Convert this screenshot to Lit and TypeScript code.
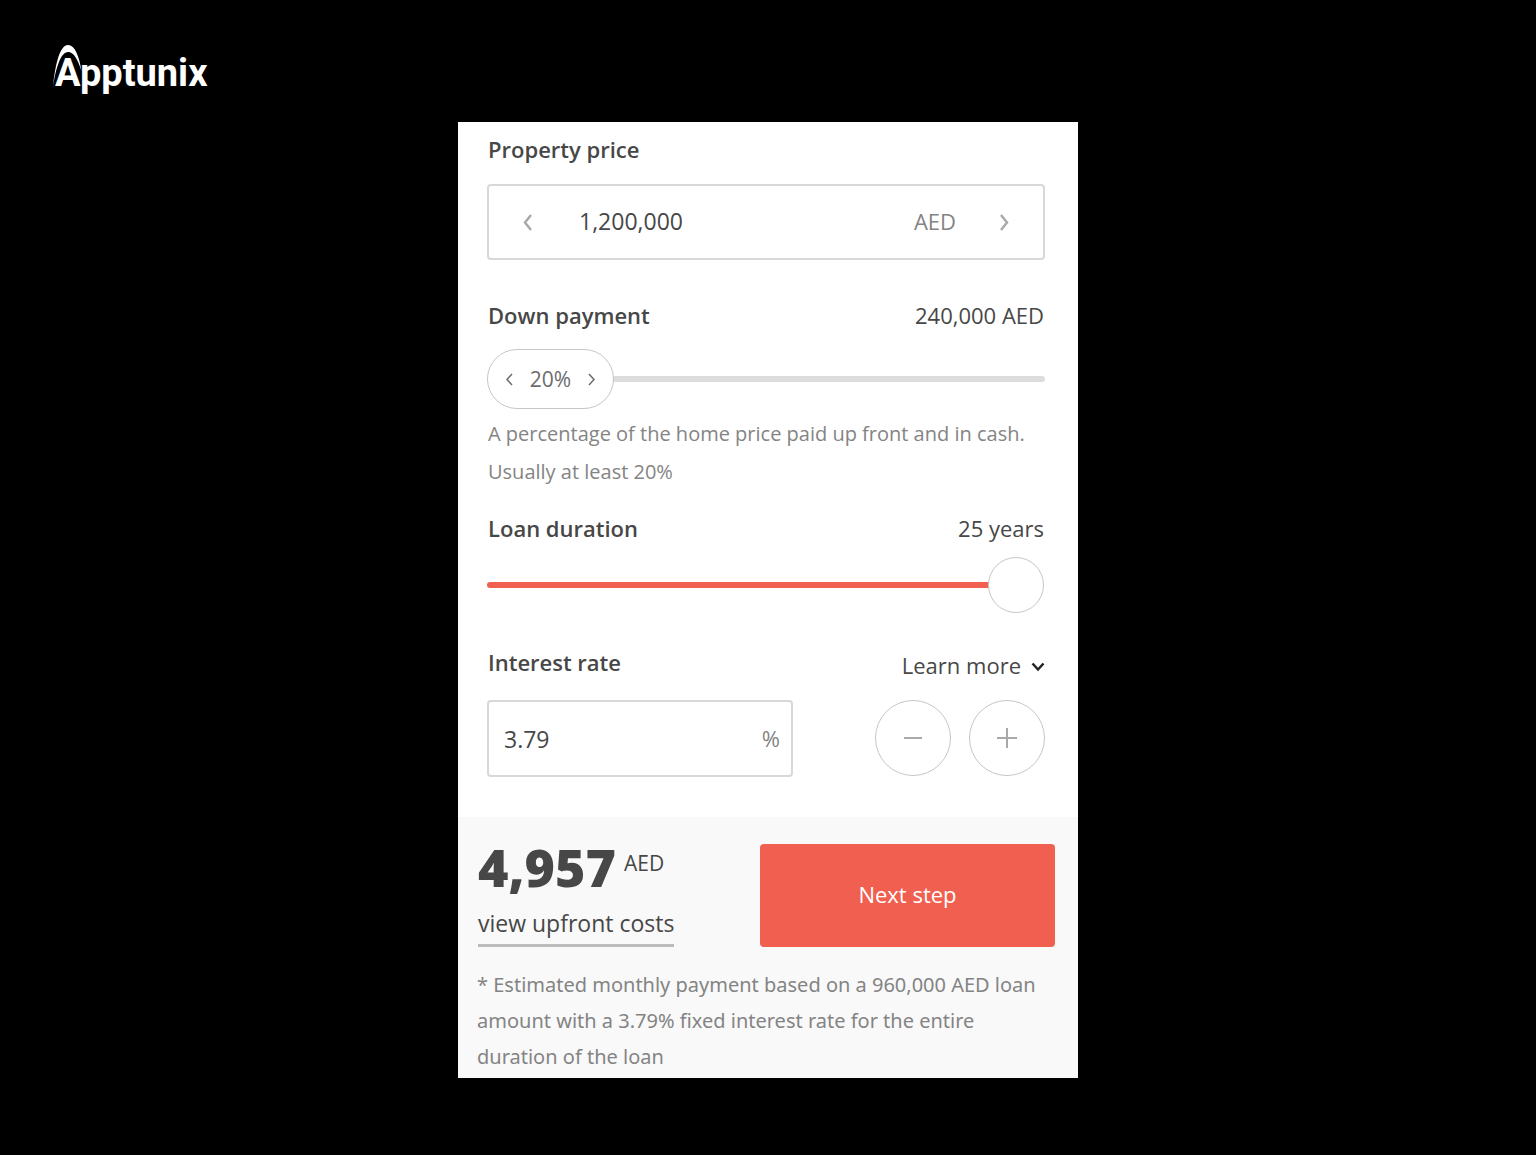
import { LitElement, html, css, svg } from "lit";
import { customElement, state } from "lit/decorators.js";

const chevronLeft = svg`<path d="M8 2 L2 9.5 L8 17" />`;
const chevronRight = svg`<path d="M2 2 L8 9.5 L2 17" />`;
const smallLeft = svg`<path d="M7 2 L2 7.5 L7 13" />`;
const smallRight = svg`<path d="M1 2 L6 7.5 L1 13" />`;

const format = (n: number) => Math.round(n).toLocaleString("en-US");

@customElement("app-root")
export class AppRoot extends LitElement {
  @state() private price = 1200000;
  @state() private percent = 20;
  @state() private years = 25;
  @state() private rate = 3.79;

  static styles = css`
    :host {
      display: block;
      min-height: 100vh;
      background: #000;
      color: #474747;
      font-family: "Open Sans", "Noto Sans", sans-serif;
      font-size: 22px;
      line-height: 32px;
    }
    * { box-sizing: border-box; }
    button, input { font: inherit; color: inherit; margin: 0; }
    button { padding: 0; border: 0; background: none; cursor: pointer; }
    svg { display: block; fill: none; stroke: currentColor; }
    p { margin: 0; }
    .top { height: 122px; padding: 44px 53px 0; }
    .brand { position: relative; display: inline-block; color: #fff; text-decoration: none; }
    .arc { position: absolute; left: 0; top: 0; fill: #fff; stroke: none; }
    .name {
      display: block;
      padding: 3px 0 0 2px;
      font-family: Roboto, sans-serif;
      font-size: 38px;
      line-height: 52px;
      font-weight: 700;
    }
    .card { width: min(100%, 620px); margin: 0 auto; background: #fff; }
    .form { padding: 11px 33px 40px 29px; }
    .row { display: flex; justify-content: space-between; align-items: center; }
    .label { font-weight: 600; padding-left: 1px; }
    output { padding-right: 1px; }
    .field {
      display: flex;
      align-items: center;
      height: 76px;
      border: 2px solid #d8d8d8;
      border-radius: 4px;
      background: #fff;
    }
    .field input {
      flex: 1;
      min-width: 0;
      height: 100%;
      border: 0;
      outline: 0;
      background: none;
      font-size: 23px;
    }
    .unit { color: #848484; }
    .price { margin: 19px 0 39px; }
    .price input { padding: 0 0 3px 12px; }
    .price .unit { padding: 0 9px 2px 0; }
    .step { display: grid; place-items: center; width: 78px; height: 100%; color: #a9a9a9; }
    .slider { position: relative; height: 60px; margin-top: 18px; }
    .range {
      display: block;
      width: 100%;
      height: 100%;
      appearance: none;
      background: none;
      cursor: pointer;
    }
    .range::-webkit-slider-runnable-track {
      height: 6px;
      border-radius: 3px;
      background: #dcdcdc;
    }
    .range::-webkit-slider-thumb {
      appearance: none;
      border: 1px solid #c6c6c6;
      background: #fff;
    }
    .deposit::-webkit-slider-thumb {
      width: 127px;
      height: 60px;
      margin-top: -27px;
      border-radius: 30px;
    }
    .duration::-webkit-slider-runnable-track {
      background: linear-gradient(to right, #f05f50 var(--fill), #dcdcdc var(--fill));
    }
    .duration::-webkit-slider-thumb {
      width: 56px;
      height: 56px;
      margin-top: -25px;
      border-radius: 50%;
    }
    .grip {
      position: absolute;
      top: 0;
      width: 127px;
      height: 60px;
      padding: 0 18px;
      display: flex;
      align-items: center;
      justify-content: space-between;
      pointer-events: none;
      font-size: 21px;
      color: #6c6c6c;
    }
    .help { margin: 6px 0 21px; padding-left: 1px; font-size: 20px; line-height: 38px; color: #848484; }
    .loan { height: 56px; margin: 13px 0 33px; padding-right: 1px; }
    .more { display: flex; align-items: center; gap: 10px; padding-top: 3px; }
    .more svg { margin-top: 4px; color: #222; }
    .interest { height: 32px; align-items: flex-start; }
    .rate { margin-top: 22px; align-items: flex-start; }
    .rate .field { width: 306px; height: 77px; padding-right: 11px; }
    .rate .field input { padding: 0 0 0 15px; }
    .rate .unit { padding-bottom: 2px; }
    .rounds { display: flex; gap: 18px; color: #a9a9a9; }
    .round {
      display: grid;
      place-items: center;
      width: 76px;
      height: 76px;
      border: 1px solid #c6c6c6;
      border-radius: 50%;
    }
    .summary { padding: 27px 23px 3px 19px; background: #f9f9f9; }
    .total { display: flex; align-items: flex-start; gap: 8px; padding-left: 1px; }
    .amount { font-size: 52px; line-height: 46px; font-weight: 800; }
    .currency { font-size: 21px; line-height: 38px; }
    .costs {
      display: inline-block;
      margin: 17px 0 0 1px;
      padding-bottom: 5px;
      border-bottom: 3px solid #bcbcbc;
      color: inherit;
      text-decoration: none;
      font-size: 23px;
    }
    .next {
      width: 295px;
      height: 103px;
      padding-bottom: 4px;
      border-radius: 4px;
      background: #f05f50;
      color: #fff;
    }
    .note {
      margin-top: 20px;
      font-family: "Noto Sans", "Open Sans", sans-serif;
      font-size: 20px;
      line-height: 36px;
      color: #848484;
    }
  `;

  private get payment() {
    const loan = this.price * (1 - this.percent / 100);
    const r = this.rate / 1200;
    const n = this.years * 12;
    return r > 0 ? (loan * r) / (1 - Math.pow(1 + r, -n)) : loan / n;
  }

  private get note() {
    const loan = format(this.price * (1 - this.percent / 100));
    return `* Estimated monthly payment based on a ${loan} AED loan amount with a ${this.rate}% fixed interest rate for the entire duration of the loan`;
  }

  private stepPrice(by: number) {
    this.price = Math.max(0, this.price + by);
  }

  private stepRate(by: number) {
    this.rate = Math.max(0, Math.round((this.rate + by) * 100) / 100);
  }

  private onPrice(e: Event) {
    const n = Number((e.target as HTMLInputElement).value.replace(/[^\d]/g, ""));
    if (n) this.price = n;
  }

  private onRate(e: Event) {
    const n = parseFloat((e.target as HTMLInputElement).value);
    if (!isNaN(n)) this.rate = n;
  }

  render() {
    const share = (this.percent - 20) / 60;
    const fill = ((this.years - 1) / 24) * 95;
    return html`
      <header class="top">
        <a class="brand" href="#">
          <svg class="arc" width="30" height="44" viewBox="0 0 30 44">
            <path d="M0 43 C2 24 6 1 15 1 C22 1 26 12 28.500 27 C25 16 21 8 15 8 C8 8 3 23 0 43 Z" />
          </svg>
          <span class="name">Apptunix</span>
        </a>
      </header>
      <main class="card">
        <section class="form">
          <label class="row label" for="price">Property price</label>
          <div class="field price">
            <button class="step" aria-label="Decrease price" @click=${() => this.stepPrice(-10000)}>
              <svg width="10" height="18" stroke-width="2.5">${chevronLeft}</svg>
            </button>
            <input id="price" type="text" .value=${format(this.price)} @change=${this.onPrice} />
            <span class="unit">AED</span>
            <button class="step" aria-label="Increase price" @click=${() => this.stepPrice(10000)}>
              <svg width="10" height="18" stroke-width="2.5">${chevronRight}</svg>
            </button>
          </div>

          <div class="row">
            <label class="label" for="deposit">Down payment</label>
            <output for="deposit">${format((this.price * this.percent) / 100) + " AED"}</output>
          </div>
          <div class="slider">
            <input id="deposit" class="range deposit" type="range" min="20" max="80"
              .value=${String(this.percent)}
              @input=${(e: Event) => (this.percent = Number((e.target as HTMLInputElement).value))} />
            <div class="grip" style="left: calc((100% - 127px) * ${share})">
              <svg width="8" height="14" stroke-width="1.5">${smallLeft}</svg>
              <span>${this.percent + "%"}</span>
              <svg width="8" height="14" stroke-width="1.5">${smallRight}</svg>
            </div>
          </div>
          <p class="help">A percentage of the home price paid up front and in cash. Usually at least 20%</p>

          <div class="row">
            <label class="label" for="duration">Loan duration</label>
            <output for="duration">${this.years + " years"}</output>
          </div>
          <div class="slider loan">
            <input id="duration" class="range duration" type="range" min="1" max="25"
              style="--fill: ${fill}%"
              .value=${String(this.years)}
              @input=${(e: Event) => (this.years = Number((e.target as HTMLInputElement).value))} />
          </div>

          <div class="row interest">
            <label class="label" for="rate">Interest rate</label>
            <button class="more">
              Learn more
              <svg width="14" height="10" stroke-width="2.5"><path d="M1.5 1.5 L7 7.5 L12.5 1.5" /></svg>
            </button>
          </div>
          <div class="row rate">
            <div class="field">
              <input id="rate" type="text" .value=${this.rate.toFixed(2)} @change=${this.onRate} />
              <span class="unit">%</span>
            </div>
            <div class="rounds">
              <button class="round" aria-label="Decrease rate" @click=${() => this.stepRate(-0.1)}>
                <svg width="20" height="20" stroke-width="2"><path d="M1 10 H19" /></svg>
              </button>
              <button class="round" aria-label="Increase rate" @click=${() => this.stepRate(0.1)}>
                <svg width="20" height="20" stroke-width="2"><path d="M0 10 H20 M10 0 V20" /></svg>
              </button>
            </div>
          </div>
        </section>

        <section class="summary">
          <div class="row">
            <div>
              <div class="total">
                <span class="amount">${format(this.payment)}</span>
                <span class="currency">AED</span>
              </div>
              <a class="costs" href="#">view upfront costs</a>
            </div>
            <button class="next">Next step</button>
          </div>
          <p class="note">${this.note}</p>
        </section>
      </main>
    `;
  }
}
